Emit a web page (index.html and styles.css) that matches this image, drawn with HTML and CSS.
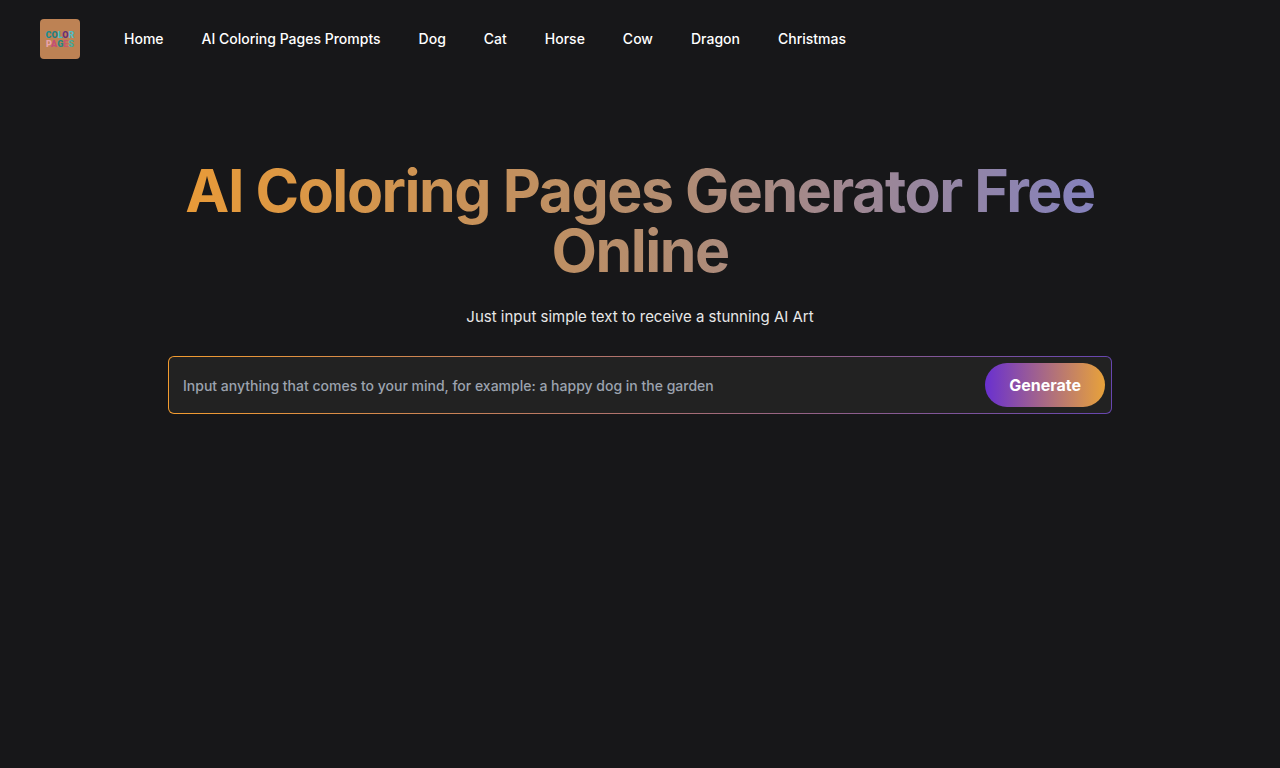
FILE: index.html
```html
<!DOCTYPE html>
<html lang="en">
<head>
    <meta charset="UTF-8">
    <meta name="viewport" content="width=device-width, initial-scale=1.0">
    <title>AI Coloring Pages Generator Free Online</title>
    <link rel="stylesheet" href="styles.css">
</head>
<body>

    <header>
        <a href="#" class="logo" aria-label="Color Pages">
            <svg width="40" height="40" viewBox="0 0 40 40">
                <rect width="40" height="40" fill="#bd8254"/>
                <g class="logo-text" text-anchor="middle">
                    <text x="20" y="19"><tspan fill="#168c91">C</tspan><tspan fill="#237d82">O</tspan><tspan fill="#43bfc0">L</tspan><tspan fill="#662f79">O</tspan><tspan fill="#58b9c5">R</tspan></text>
                    <text x="20" y="28"><tspan fill="#e9a3ab">P</tspan><tspan fill="#c64c77">A</tspan><tspan fill="#268780">G</tspan><tspan fill="#c65870">E</tspan><tspan fill="#45aaa0">S</tspan></text>
                </g>
            </svg>
        </a>
        <nav>
            <a href="#">Home</a>
            <a href="#">AI Coloring Pages Prompts</a>
            <a href="#">Dog</a>
            <a href="#">Cat</a>
            <a href="#">Horse</a>
            <a href="#">Cow</a>
            <a href="#">Dragon</a>
            <a href="#">Christmas</a>
        </nav>
    </header>

    <main class="container">
        <h1>AI Coloring Pages Generator Free Online</h1>
        <p class="subtitle">Just input simple text to receive a stunning AI Art</p>

        <form class="prompt-box">
            <input type="text" aria-label="Prompt" placeholder="Input anything that comes to your mind, for example: a happy dog in the garden">
            <button type="button">Generate</button>
        </form>
    </main>

</body>
</html>
```
FILE: styles.css
```css
* { box-sizing: border-box; }
body { background: #171719; color: #fff; font-family: Inter, "Liberation Sans", sans-serif; margin: 0; }

/* HEADER */
header {
    display: flex; align-items: center; gap: 44px;
    padding: 19px 40px;
}

.logo { display: block; width: 40px; height: 40px; border-radius: 4px; overflow: hidden; }
.logo svg { display: block; }
.logo-text { font-family: Roboto, sans-serif; font-size: 9px; font-weight: 900; }

nav { display: flex; gap: 38px; }
nav a { color: #fff; font-size: 14px; line-height: 20px; font-weight: 500; text-decoration: none; }

/* HERO */
.container { max-width: 992px; margin: 0 auto; padding: 83px 24px 40px; text-align: center; }

h1 {
    margin: 0; font-size: 59px; line-height: 60px; font-weight: 700; letter-spacing: -0.025em;
    background: linear-gradient(to right, #ea9b36, #b58d6d 50%, #8381c0);
    -webkit-background-clip: text; background-clip: text;
    color: transparent;
}

.subtitle { margin: 24px 0 27px; font-size: 15px; line-height: 24px; color: #e8e8e8; }

/* Gradient outline sits in the border area */
.prompt-box {
    display: flex; align-items: center; gap: 8px;
    padding: 6px; border: 1px solid transparent; border-radius: 6px;
    background: linear-gradient(#222, #222) padding-box, linear-gradient(to right, #f39c2f, #6746b0) border-box;
}

.prompt-box input {
    flex: 1; min-width: 0; height: 44px; padding: 0 8px;
    border: 0; outline: 0; background: none;
    color: #fff; font-family: inherit; font-size: 14px; font-weight: 500;
}
.prompt-box input::placeholder { color: #9ca3af; opacity: 1; }

.prompt-box button {
    height: 44px; padding: 0 24px; border: 0; border-radius: 22px;
    background: linear-gradient(to right, #6930d0, #e8a23a);
    color: #fff; font-family: inherit; font-size: 16px; font-weight: 700; cursor: pointer;
}
```
